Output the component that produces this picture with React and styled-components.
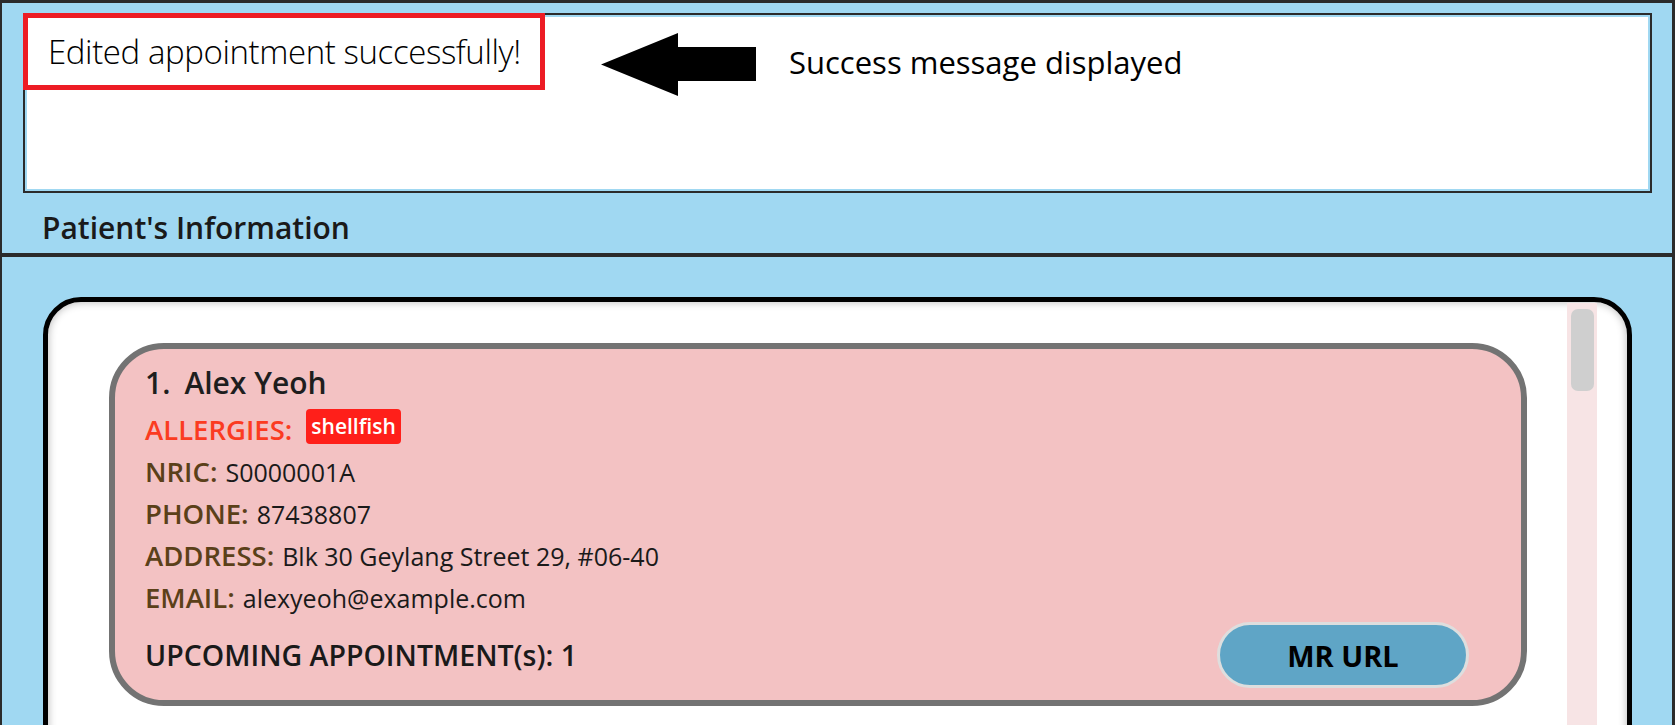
import styled, { createGlobalStyle } from "styled-components";

const GlobalStyle = createGlobalStyle`
  * { box-sizing: border-box; }
  html, body { margin: 0; padding: 0; background: #a0d8f2; }
  body { font-family: "Open Sans", "Noto Sans", sans-serif; }
`;

export default function App() {
  return (
    <>
      <GlobalStyle />
      <Frame>
        <TopPane>
          <ResultBox>
            <Annotation>
              <Highlight>
                <ResultText>Edited appointment successfully!</ResultText>
              </Highlight>
              <Arrow width="156" height="63" viewBox="0 0 156 63">
                <polygon points="1,31.5 78,0 78,14 156,14 156,48 78,48 78,63" fill="#000" />
              </Arrow>
              <Note>Success message displayed</Note>
            </Annotation>
          </ResultBox>
          <PaneTitle>Patient's Information</PaneTitle>
        </TopPane>

        <ListPane>
          <ListPanel>
            <ListArea>
              <PersonCard>
                <Name>
                  <span>1.</span>
                  <span>Alex Yeoh</span>
                </Name>
                <Row>
                  <Label $alert>ALLERGIES:</Label>
                  <Tag>shellfish</Tag>
                </Row>
                <Row>
                  <Label>NRIC:</Label>
                  <Value>S0000001A</Value>
                </Row>
                <Row>
                  <Label>PHONE:</Label>
                  <Value>87438807</Value>
                </Row>
                <Row>
                  <Label>ADDRESS:</Label>
                  <Value>Blk 30 Geylang Street 29, #06-40</Value>
                </Row>
                <Row>
                  <Label>EMAIL:</Label>
                  <Value>alexyeoh@example.com</Value>
                </Row>
                <Footer>
                  <Upcoming>UPCOMING APPOINTMENT(s): 1</Upcoming>
                  <UrlButton>MR URL</UrlButton>
                </Footer>
              </PersonCard>
            </ListArea>
            <ScrollTrack>
              <ScrollThumb />
            </ScrollTrack>
          </ListPanel>
        </ListPane>
      </Frame>
    </>
  );
}

const Frame = styled.div`
  width: 1675px;
  height: 725px;
  overflow: hidden;
  display: flex;
  flex-direction: column;
  border-top: 3px solid #2b2b2b;
  border-left: 2px solid #2b2b2b;
  border-right: 3px solid #2b2b2b;
  background: #a0d8f2;
`;

const TopPane = styled.div`
  padding: 10px 20px 5px 21px;
  border-bottom: 4px solid #2b2b2b;
`;

const ResultBox = styled.div`
  position: relative;
  height: 180px;
  background: #fff;
  border: 2px solid #2b2b2b;
  box-shadow: inset 0 0 0 2px #a0d8f2;
`;

const Annotation = styled.div`
  position: absolute;
  top: -2px;
  left: -2px;
  display: flex;
  align-items: flex-start;
`;

const Highlight = styled.div`
  width: 522px;
  height: 77px;
  border: 5px solid #ed1c24;
  background: #fff;
  display: flex;
  align-items: center;
  padding-left: 20px;
`;

const ResultText = styled.div`
  font-family: "Open Sans", sans-serif;
  font-weight: 300;
  font-size: 33px;
  letter-spacing: -0.4px;
  line-height: 46px;
  color: #000;
  white-space: nowrap;
`;

const Arrow = styled.svg`
  display: block;
  margin: 20px 0 0 55px;
`;

const Note = styled.div`
  margin: 29px 0 0 33px;
  font-family: "Open Sans", sans-serif;
  font-size: 31px;
  line-height: 40px;
  color: #000;
  white-space: nowrap;
`;

const PaneTitle = styled.div`
  margin: 15px 0 0 19px;
  font-size: 30px;
  font-weight: 600;
  line-height: 40px;
  color: #1a1a1a;
`;

const ListPane = styled.div`
  flex: 1;
  padding: 40px 40px 0 41px;
`;

const ListPanel = styled.div`
  height: 560px;
  display: flex;
  padding-right: 30px;
  background: #fff;
  border: 5px solid #000;
  border-radius: 38px;
  box-shadow: inset 0 0 8px rgba(0, 0, 0, 0.3);
`;

const ListArea = styled.div`
  flex: 1;
  padding: 41px 40px 0 61px;
`;

const ScrollTrack = styled.div`
  width: 30px;
  margin-top: 1px;
  padding: 6px 3px 0 4px;
  background: #f7e4e5;
`;

const ScrollThumb = styled.div`
  height: 82px;
  border-radius: 7px;
  background: #cfcfcf;
`;

const PersonCard = styled.div`
  height: 363px;
  padding: 14px 52px 0 30px;
  background: #f3c2c3;
  border: 6px solid #737373;
  border-radius: 55px;
`;

const Name = styled.div`
  display: flex;
  gap: 14px;
  margin-bottom: 6px;
  font-size: 30px;
  font-weight: 600;
  line-height: 40px;
  color: #1e1e1e;
`;

const Row = styled.div`
  display: flex;
  align-items: flex-start;
  height: 42px;
`;

const Label = styled.span`
  font-size: 27.5px;
  font-weight: 600;
  line-height: 42px;
  color: ${(p) => (p.$alert ? "#fb3b21" : "#5b4019")};
  margin-right: 8px;
`;

const Value = styled.span`
  font-size: 25px;
  line-height: 42px;
  color: #1a1a1a;
  white-space: nowrap;
`;

const Tag = styled.span`
  height: 35px;
  margin-left: 6px;
  padding: 0 5px;
  border-radius: 4px;
  background: #ff1f1a;
  color: #fff;
  font-size: 21px;
  font-weight: 600;
  line-height: 34px;
`;

const Footer = styled.div`
  display: flex;
  align-items: center;
  justify-content: space-between;
  margin-top: 3px;
`;

const Upcoming = styled.div`
  font-size: 28.5px;
  font-weight: 600;
  line-height: 40px;
  color: #1a1a1a;
`;

const UrlButton = styled.button`
  width: 252px;
  height: 66px;
  border: 3px solid #dedede;
  border-radius: 33px;
  background: #5fa5c6;
  font-family: "Open Sans", sans-serif;
  font-size: 29px;
  font-weight: 700;
  color: #000;
  cursor: pointer;
`;
